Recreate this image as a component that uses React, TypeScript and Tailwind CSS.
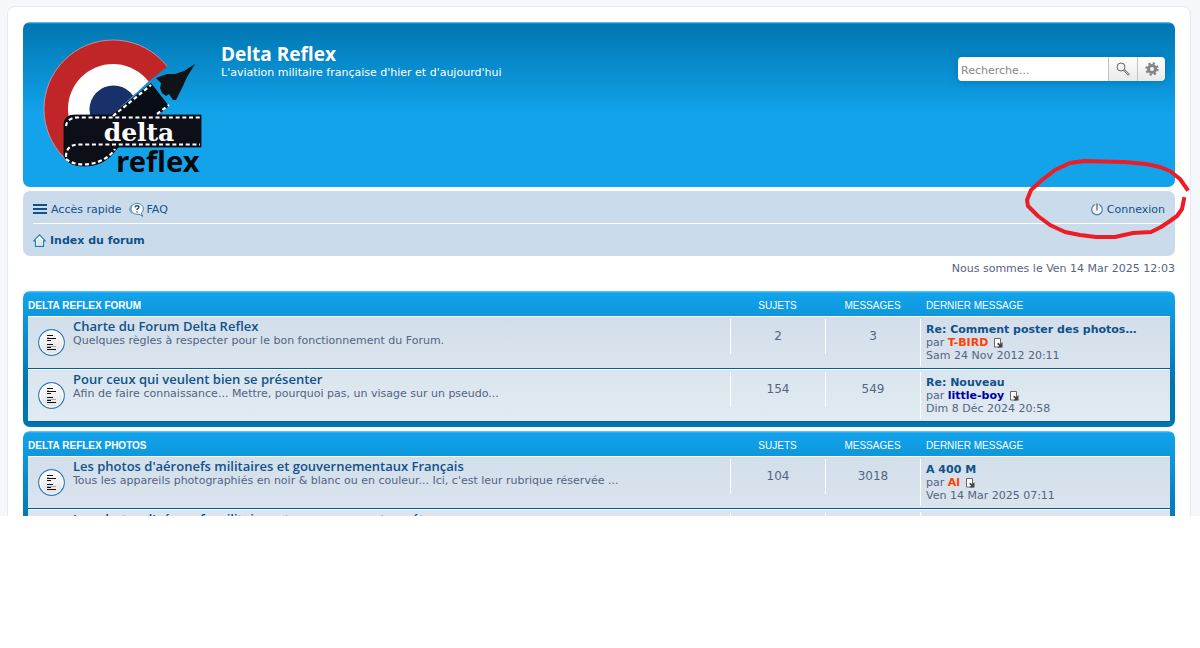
import React from 'react';

type LastPost = {
  title: string;
  author: string;
  authorColor: string;
  date: string;
};

type Forum = {
  name: string;
  desc: string;
  topics: number;
  posts: number;
  last: LastPost;
};

type Category = {
  title: string;
  forums: Forum[];
};

const categories: Category[] = [
  {
    title: 'Delta Reflex Forum',
    forums: [
      {
        name: 'Charte du Forum Delta Reflex',
        desc: 'Quelques règles à respecter pour le bon fonctionnement du Forum.',
        topics: 2,
        posts: 3,
        last: { title: 'Re: Comment poster des photos…', author: 'T-BIRD', authorColor: 'text-[#ff4000]', date: 'Sam 24 Nov 2012 20:11' },
      },
      {
        name: 'Pour ceux qui veulent bien se présenter',
        desc: 'Afin de faire connaissance... Mettre, pourquoi pas, un visage sur un pseudo...',
        topics: 154,
        posts: 549,
        last: { title: 'Re: Nouveau', author: 'little-boy', authorColor: 'text-[#0000a0]', date: 'Dim 8 Déc 2024 20:58' },
      },
    ],
  },
  {
    title: 'Delta Reflex Photos',
    forums: [
      {
        name: "Les photos d'aéronefs militaires et gouvernementaux Français",
        desc: "Tous les appareils photographiés en noir & blanc ou en couleur... Ici, c'est leur rubrique réservée ...",
        topics: 104,
        posts: 3018,
        last: { title: 'A 400 M', author: 'Al', authorColor: 'text-[#ff4000]', date: 'Ven 14 Mar 2025 07:11' },
      },
      {
        name: "Les photos d'aéronefs militaires et gouvernementaux étrangers",
        desc: "Tous les appareils étrangers photographiés en noir & blanc ou en couleur...",
        topics: 98,
        posts: 2140,
        last: { title: 'Re: F-16', author: 'Al', authorColor: 'text-[#ff4000]', date: 'Jeu 13 Mar 2025 19:42' },
      },
    ],
  },
];

export default function App() {
  return (
    <div className="min-h-screen bg-white font-['DejaVu_Sans',Verdana,sans-serif] text-[11px] leading-[13px] text-[#536482]">
      <div className="relative max-h-[516px] overflow-hidden bg-[#f5f7fa] pt-[6px] pr-[9px] pl-[7px]">
        <div className="rounded-lg border border-[#e6e9ed] bg-white p-[15px]">
          <Header />
          <NavBar />
          <p className="pt-[6px] pb-[16px] text-right">Nous sommes le Ven 14 Mar 2025 12:03</p>
          <main className="flex flex-col gap-1">
            {categories.map((category) => (
              <CategoryTable key={category.title} category={category} />
            ))}
          </main>
        </div>
        <Marker />
      </div>
    </div>
  );
}

function Header() {
  return (
    <header className="flex items-start rounded-[7px] bg-[linear-gradient(to_bottom,#6aceff_0px,#0076b1_2px,#12a3eb_92px)] px-[10px] pt-[14px] pb-[9px] text-white">
      <a href="#" aria-label="Delta Reflex" className="shrink-0 pl-[8px]">
        <Logo />
      </a>
      <div className="flex-1 pt-[8px] pl-[19px]">
        <h1 className="font-['Open_Sans','Trebuchet_MS',sans-serif] text-[19px] leading-5 font-bold">Delta Reflex</h1>
        <p className="mt-[2px]">L'aviation militaire française d'hier et d'aujourd'hui</p>
      </div>
      <form className="mt-[21px] flex h-6 overflow-hidden rounded shadow-[0_0_10px_#0075b0]" onSubmit={(e) => e.preventDefault()}>
        <input
          type="search"
          aria-label="Recherche"
          placeholder="Recherche…"
          className="w-[150px] bg-white px-[3px] pt-[2px] text-[11px] text-[#333] outline-none placeholder:text-[#888]"
        />
        <button type="submit" aria-label="Rechercher" className="flex w-[29px] items-center justify-center border-l border-[#c7c3bf] bg-linear-to-b from-white to-[#e9e9e9]">
          <SearchIcon />
        </button>
        <button type="button" aria-label="Recherche avancée" className="flex w-[28px] items-center justify-center border-l border-[#c7c3bf] bg-linear-to-b from-white to-[#e9e9e9]">
          <GearIcon />
        </button>
      </form>
    </header>
  );
}

function NavBar() {
  return (
    <nav className="mt-1 rounded-[7px] bg-[#cadceb] px-[10px] text-[#105289]">
      <div className="flex h-[33px] items-center gap-2 border-b border-white pt-[5px]">
        <a href="#" className="flex items-center gap-1">
          <MenuIcon />
          Accès rapide
        </a>
        <a href="#" className="flex items-center gap-[2px]">
          <FaqIcon />
          FAQ
        </a>
        <a href="#" className="ml-auto flex items-center gap-1">
          <PowerIcon />
          Connexion
        </a>
      </div>
      <div className="flex h-8 items-center">
        <a href="#" className="flex items-center gap-1 font-bold">
          <HomeIcon />
          Index du forum
        </a>
      </div>
    </nav>
  );
}

function CategoryTable({ category }: { category: Category }) {
  return (
    <section className="rounded-[7px] bg-[#0076b1] bg-[linear-gradient(to_bottom,#6aceff_0px,#12a3eb_2px,#0076b1_92px)] px-[5px] pb-[5px]">
      <table className="w-full table-fixed border-separate border-spacing-0">
        <colgroup>
          <col />
          <col className="w-[95px]" />
          <col className="w-[95px]" />
          <col className="w-[250px]" />
        </colgroup>
        <thead>
          <tr className="h-[25px] font-['Liberation_Sans',Arial,sans-serif] text-[10px] text-white uppercase">
            <th className="pt-1 text-left font-bold">{category.title}</th>
            <th className="pt-1 font-normal">Sujets</th>
            <th className="pt-1 font-normal">Messages</th>
            <th className="pt-1 pl-[6px] text-left font-normal">Dernier message</th>
          </tr>
        </thead>
        <tbody className="bg-linear-to-b from-[#d2deea] to-[#e1ebf2]">
          {category.forums.map((forum) => (
            <ForumRow key={forum.name} forum={forum} />
          ))}
        </tbody>
      </table>
    </section>
  );
}

function ForumRow({ forum }: { forum: Forum }) {
  return (
    <tr className="h-[53px] align-top shadow-[inset_0_1px_0_#fff,inset_0_-1px_0_#00608f]">
      <td>
        <div className="flex">
          <span className="pt-[13px] pr-2 pl-[10px]">
            <TopicIcon />
          </span>
          <div className="pt-[3px]">
            <a href="#" className="block font-['Open_Sans','Trebuchet_MS',sans-serif] text-[13px] leading-[14px] font-semibold text-[#105289]">
              {forum.name}
            </a>
            <p className="mt-px">{forum.desc}</p>
          </div>
        </div>
      </td>
      <td className="pt-[3px]">
        <Count value={forum.topics} />
      </td>
      <td className="pt-[3px]">
        <Count value={forum.posts} />
      </td>
      <td className="pt-[3px]">
        <div className="h-[47px] border-l border-white pt-[4px] pl-[5px]">
          <a href="#" className="block font-bold text-[#105289]">{forum.last.title}</a>
          <div className="flex items-center">
            par&nbsp;
            <a href="#" className={`font-bold ${forum.last.authorColor}`}>{forum.last.author}</a>
            <a href="#" aria-label="Voir le dernier message" className="ml-[6px]">
              <LatestIcon />
            </a>
          </div>
          <p>{forum.last.date}</p>
        </div>
      </td>
    </tr>
  );
}

function Count({ value }: { value: number }) {
  return <div className="h-[35px] border-l border-white text-center text-[12px] leading-[35px]">{value}</div>;
}

function Logo() {
  return (
    <svg width="161" height="142" viewBox="41 36 161 142" className="block">
      <defs>
        <clipPath id="cockade">
          <path d="M40 36H160L168 66L148 82L110 117L64 124V159H40Z" />
        </clipPath>
      </defs>
      <g clipPath="url(#cockade)">
        <circle cx="113" cy="109" r="69" fill="#c02527" stroke="#d9a0a8" strokeWidth="0.8" />
        <circle cx="113" cy="109" r="45" fill="#fff" />
        <circle cx="113.500" cy="109.500" r="24" fill="#18316b" />
      </g>
      <path d="M110 116L151 83L169 106L155 118L118 147C109 162 97 166 84 166C72 166 64 161 64 153V124Q64 115 75 115Z" fill="#090d15" />
      <path d="M64 124Q65 115 75 115H201V147H118C108 162 96 166 84 166C70 166 64 160 64 153Z" fill="#0c0f18" stroke="#00070d" strokeWidth="0.8" />
      <g fill="none" stroke="#fff" strokeWidth="2.2" strokeDasharray="4 2.7">
        <path d="M113 116L151 85M157 114L169 105" />
        <path d="M66 126Q67 118 77 117.500H200" />
        <path d="M66 157Q66 144 80 144.500H200" />
        <path d="M66 159C78 169 105 165 115 149" />
      </g>
      <path d="M156 78L167 74L175 74L184 71L195 64L187 77L183 86L176 100L173 100L169 94L166 96L162 93L160 88L161 83Z" fill="#101419" />
      <text x="139" y="141" textAnchor="middle" fill="#fff" className="font-['DejaVu_Serif',serif] text-[25px] font-bold">delta</text>
      <text x="158" y="172" textAnchor="middle" fill="#05080b" className="font-['Noto_Sans',sans-serif] text-[29px] font-bold">reflex</text>
    </svg>
  );
}

function SearchIcon() {
  return (
    <svg width="14" height="14" viewBox="0 0 14 14" fill="none">
      <path d="M8 8L13 13" stroke="#777" strokeWidth="2.400" />
      <path d="M8.500 8.500L12.500 12.500" stroke="#ddd" strokeWidth="0.800" />
      <circle cx="5" cy="5" r="4" fill="#f4f4f4" stroke="#666" />
    </svg>
  );
}

function GearIcon() {
  return (
    <svg width="14" height="14" viewBox="0 0 14 14" fill="none" stroke="#858585">
      <circle cx="7" cy="7" r="3.500" strokeWidth="3" />
      <circle cx="7" cy="7" r="5.700" strokeWidth="2" strokeDasharray="2.300 2.177" />
    </svg>
  );
}

function MenuIcon() {
  return (
    <svg width="14" height="12" viewBox="0 0 14 12" fill="#105289">
      <path d="M0 0h14v2H0zM0 4h14v2H0zM0 8h14v2H0z" />
    </svg>
  );
}

function FaqIcon() {
  return (
    <svg width="15" height="14" viewBox="0 0 15 14" fill="none">
      <path d="M3.500 1.800C.200 3.500-.300 8.500 3.200 10.500" stroke="#5a8fb5" />
      <path d="M8 .500C11.700.500 14.300 2.800 14.300 5.800C14.300 7.800 13.300 9.200 12.300 10L13.800 13.400L10 11.200C5.500 11.800 2 9.500 2 5.800C2 2.800 4.500.500 8 .500Z" fill="#fff" stroke="#3f7da8" />
      <path d="M6 4.300Q6.300 2.800 8 2.800Q10 2.800 10 4.300Q10 5.200 8.100 6.100V7M8.100 8.200V9.600" stroke="#105289" strokeWidth="1.400" />
    </svg>
  );
}

function PowerIcon() {
  return (
    <svg width="12" height="13" viewBox="0 0 12 13" fill="none">
      <circle cx="6" cy="6.500" r="5.300" fill="#f3f6f8" stroke="#4b82a8" strokeWidth="1.200" />
      <path d="M3.800 1.500H8.200" stroke="#cadceb" strokeWidth="2" />
      <path d="M6 .500V7.500" stroke="#777" strokeWidth="1.500" />
    </svg>
  );
}

function HomeIcon() {
  return (
    <svg width="13" height="13" viewBox="0 0 13 13">
      <path d="M6.500.800L12.300 6.800H10.500V12.400H2.500V6.800H.700Z" fill="#fff" stroke="#1580b8" strokeWidth="1.200" strokeLinejoin="round" />
      <path d="M6.500 4L9 6.500V11H4V6.500Z" fill="#e4e4e4" />
    </svg>
  );
}

function TopicIcon() {
  return (
    <svg width="27" height="27" viewBox="0 0 27 27" className="block">
      <defs>
        <linearGradient id="disc" x1="0" y1="0" x2="0" y2="1">
          <stop offset="0" stopColor="#fff" />
          <stop offset="1" stopColor="#dfe1e4" />
        </linearGradient>
      </defs>
      <circle cx="13.500" cy="13.500" r="12.800" fill="url(#disc)" stroke="#3579b8" strokeWidth="1.200" />
      <circle cx="13.500" cy="13.500" r="11.600" fill="none" stroke="#fff" />
      <path d="M9 6.500h6M9 9.500h9M9 11.500h4M9 15.500h6M9 18.500h4M9 20.500h9" stroke="#111" />
      <path d="M9 8.500h2M9 17.500h9" stroke="#aaa" />
    </svg>
  );
}

function LatestIcon() {
  return (
    <svg width="9" height="10" viewBox="0 0 9 10" className="block">
      <path d="M.500.500H6.500V9H.500Z" fill="#fff" stroke="#666" />
      <path d="M8.500 4V9.500H3.500L5.200 7.800L3 6L4.200 4.800L6.300 6.300Z" fill="#444" />
    </svg>
  );
}

// Hand-drawn red circle around the login link
function Marker() {
  return (
    <svg width="166" height="84" viewBox="1024 157 166 84" fill="none" className="pointer-events-none absolute top-[157px] right-[10px]">
      <path
        d="M1187 189L1180 179L1170 171L1160 167L1146 164L1124 162L1084 161L1070 163L1055 170L1042 180L1031 190L1027 200L1028 206L1038 216L1050 225L1065 232L1080 235L1096 237L1115 237L1133 233L1151 232L1161 227L1170 221L1177 216L1182 209L1184 199"
        stroke="#ee1c24"
        strokeWidth="4"
        strokeLinecap="square"
        strokeLinejoin="round"
      />
    </svg>
  );
}
